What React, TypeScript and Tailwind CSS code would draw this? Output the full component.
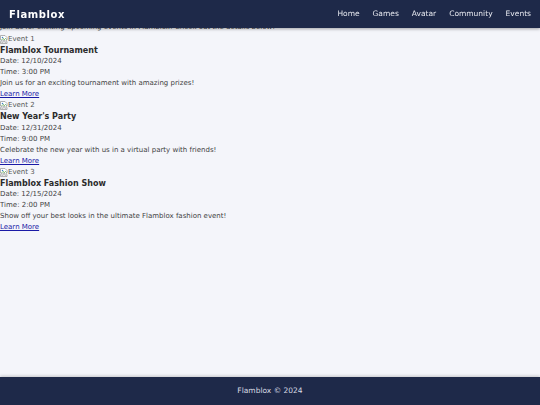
import React from "react";

const events = [
  {
    img: "Event 1",
    title: "Flamblox Tournament",
    date: "12/10/2024",
    time: "3:00 PM",
    text: "Join us for an exciting tournament with amazing prizes!",
  },
  {
    img: "Event 2",
    title: "New Year's Party",
    date: "12/31/2024",
    time: "9:00 PM",
    text: "Celebrate the new year with us in a virtual party with friends!",
  },
  {
    img: "Event 3",
    title: "Flamblox Fashion Show",
    date: "12/15/2024",
    time: "2:00 PM",
    text: "Show off your best looks in the ultimate Flamblox fashion event!",
  },
];

const links = ["Home", "Games", "Avatar", "Community", "Events"];

// stand-in for the browser's broken image glyph
const BrokenImage = () => (
  <svg width="8" height="9" viewBox="0 0 16 18" className="shrink-0">
    <path d="M1 1h9l4 4v5l-3 2-3-2-3 2-4-2z" fill="#fff" stroke="#9a9a9a" strokeWidth="1.5" />
    <path d="M3 10l3-3 3 2 2-2 2 2" fill="none" stroke="#4a9a3a" strokeWidth="1.5" />
    <path d="M1 13l4 2 3-2 3 2 3-2v4H1z" fill="#fff" stroke="#9a9a9a" strokeWidth="1.5" />
    <circle cx="5" cy="5" r="1.5" fill="#3b82c4" />
  </svg>
);

export default function App() {
  return (
    <div className="min-h-screen flex flex-col bg-[#f4f5fa] font-['DejaVu_Sans',sans-serif] text-[#3f3f3f]">
      <header className="fixed top-0 left-0 right-0 z-10 h-[28px] bg-[#1e2949] shadow-[0_1px_3px_rgba(0,0,0,0.35)] flex items-center justify-between px-[9px]">
        <h1 className="text-[10px] font-bold tracking-[0.6px] text-white">Flamblox</h1>
        <nav className="flex gap-[13px] text-[7.5px] text-[#e6e8ef]">
          {links.map((l) => (
            <a key={l} href="#">
              {l}
            </a>
          ))}
        </nav>
      </header>

      <main className="flex-1 pt-[21.5px] text-[7px] leading-[11px]">
        <p className="mb-[1px]">Join us for exciting upcoming events in Flamblox! Check out the details below!</p>
        {events.map((e) => (
          <div key={e.title}>
            <div className="h-[11px] flex items-center text-[#555]">
              <BrokenImage />
              {e.img}
            </div>
            <h3 className="text-[8px] leading-[11.5px] font-bold text-[#2b2b2b]">{e.title}</h3>
            <p>Date: {e.date}</p>
            <p>Time: {e.time}</p>
            <p>{e.text}</p>
            <a href="#" className="text-[#1a1aa6] underline">
              Learn More
            </a>
          </div>
        ))}
      </main>

      <footer className="h-[28px] bg-[#1e2949] shadow-[0_-1px_3px_rgba(0,0,0,0.2)] flex items-center justify-center text-[7.5px] text-[#d8dbe4]">
        Flamblox © 2024
      </footer>
    </div>
  );
}
